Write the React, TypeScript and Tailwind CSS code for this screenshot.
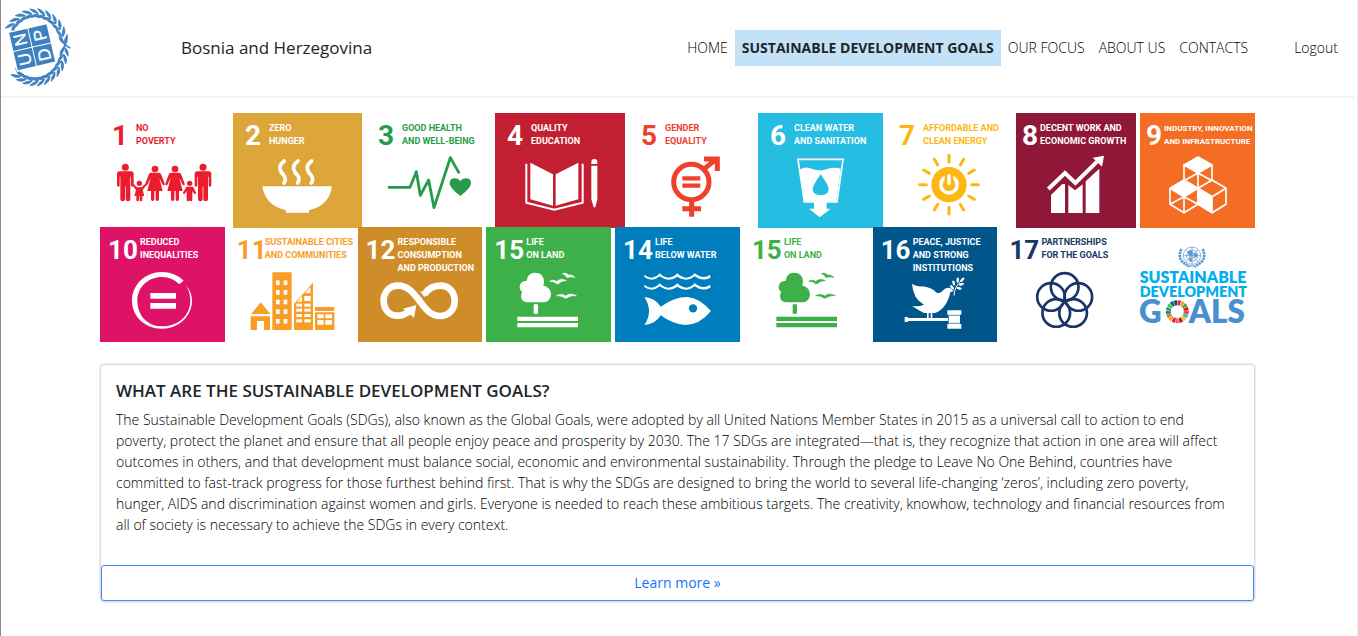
import React from "react";

type Goal = {
  id: string;
  num: string;
  lines: string[];
  tone: string;
  viewBox: string;
  tight?: boolean;
  small?: boolean;
  art: React.ReactNode;
};

const polar = (cx: number, cy: number, r: number, deg: number): [number, number] => [
  cx + r * Math.cos((deg * Math.PI) / 180),
  cy + r * Math.sin((deg * Math.PI) / 180),
];

function Adult({ x, y = 168 }: { x: number; y?: number }) {
  return (
    <g transform={`translate(${x} ${y})`}>
      <circle cx="0" cy="10" r="10.5" />
      <path d="M-17 22h34q8 0 8 8v34q0 4-4 4t-4-4V38h-2v68q0 6-7 6t-7-6V68h-2v38q0 6-7 6t-7-6V38h-2v26q0 4-4 4t-4-4V30q0-8 8-8z" />
    </g>
  );
}

function Woman({ x }: { x: number }) {
  return (
    <g transform={`translate(${x} 173)`}>
      <circle cx="0" cy="10" r="10" />
      <path d="M-12 21h24q5 0 7 6l10 27q1 4-2 5t-5-3l-9-20 10 40H12v25q0 5-5 5t-5-5V76h-4v25q0 5-5 5t-5-5V76h-11l10-40-9 20q-2 4-5 3t-2-5l10-27q2-6 7-6z" />
    </g>
  );
}

function Family() {
  return (
    <g fill="currentColor">
      <Adult x={91} />
      <Adult x={324} />
      <Woman x={180} />
      <Woman x={240} />
      <circle cx="133" cy="226" r="8" />
      <path d="M116 228l10 10h14l10-10 4 4-11 14 5 18h-6v12q0 4-4 4t-4-4v-12h-2v12q0 4-4 4t-4-4v-12h-6l5-18-11-14z" />
      <circle cx="284" cy="226" r="8" />
      <path d="M274 236h20l10 20-5 3-7-10v26q0 5-4 5t-4-5v-14v14q0 5-5 5t-4-5v-26l-7 10-5-3z" />
    </g>
  );
}

function Bowl() {
  return (
    <g>
      <path d="M502 235h209q-8 58-69 72v7h-69v-7q-62-14-71-72z" fill="currentColor" />
      {[568, 609, 650].map((x) => (
        <path
          key={x}
          d={`M${x} 159q-16 12-13 24t11 18q9 12 1 24`}
          fill="none"
          stroke="currentColor"
          strokeWidth="11"
          strokeLinecap="round"
        />
      ))}
    </g>
  );
}

function Pulse() {
  return (
    <g>
      <path
        d="M87 238h63l19-47 12 71 25-46 16 83 49-150 25 44"
        fill="none"
        stroke="currentColor"
        strokeWidth="8.5"
        strokeLinecap="round"
        strokeLinejoin="round"
      />
      <path d="M301 264q-32-24-32-38 0-15 15-15 12 0 17 9 5-9 17-9 15 0 15 15 0 14-32 38z" fill="currentColor" />
    </g>
  );
}

function Book() {
  return (
    <g fill="currentColor">
      <path d="M511 164l68 35v94l-68-19zM587 199l68-35v110l-68 19z" />
      <path d="M499 167v117l84 21 85-21V167" fill="none" stroke="currentColor" strokeWidth="6" />
      <path d="M694 168v-7q0-8 9-8t9 8v7zM694 173h18v101l-6 24h-5l-7-24z" />
    </g>
  );
}

function Gender() {
  return (
    <g fill="none" stroke="currentColor">
      <circle cx="199" cy="222" r="53" strokeWidth="15" />
      <path d="M200 276v50M172 302h56" strokeWidth="15" />
      <path d="M236 184l40-33M237 153h40v36" strokeWidth="15" />
      <path d="M172 211h54M172 233h54" strokeWidth="13" />
    </g>
  );
}

function Water() {
  return (
    <g>
      <path d="M519 154h135l-18 128h-98z" fill="none" stroke="currentColor" strokeWidth="5" />
      <path
        d="M524 185q16-10 31-4 26 10 44 4 26-10 48-3l-13 100h-29v20h12l-33 26-32-26h15v-20h-30z"
        fill="currentColor"
      />
      <path d="M587 199q24 34 24 43 0 19-24 19t-24-19q0-9 24-43z" fill="#26bde2" />
    </g>
  );
}

function Sun() {
  return (
    <g>
      <circle cx="177" cy="230" r="53" fill="currentColor" />
      {Array.from({ length: 12 }, (_, i) => {
        const [x1, y1] = polar(177, 230, 68, i * 30);
        const [x2, y2] = polar(177, 230, 88, i * 30);
        return (
          <line key={i} x1={x1} y1={y1} x2={x2} y2={y2} stroke="currentColor" strokeWidth="9" strokeLinecap="round" />
        );
      })}
      <circle cx="177" cy="230" r="30" fill="#fff" />
      <circle cx="177" cy="230" r="19" fill="currentColor" />
      <path d="M164 196h26v30h-26z" fill="currentColor" />
      <path d="M177 203v23" stroke="#fff" strokeWidth="10" strokeLinecap="round" />
    </g>
  );
}

function Growth() {
  return (
    <g fill="currentColor">
      <path d="M483 315v-54l34-33h8v87zM535 315v-84l20 16 23-18v86zM587 315v-95l41-38v133z" />
      <path d="M475 243l50-48 31 30 65-64" fill="none" stroke="currentColor" strokeWidth="12" />
      <path d="M642 143l-6 33-28-27z" />
    </g>
  );
}

function Cubes() {
  return (
    <g fill="none" stroke="currentColor" strokeWidth="5" strokeLinejoin="round">
      <path d="M924 147l42 24-42 24-42-24z" fill="currentColor" />
      <path d="M882 170v48M966 170v48M924 195v46M882 218l42-23 42 23" />
      <path d="M882 216l42 25-42 25-42-25z" fill="currentColor" />
      <path d="M840 241v48l42 25 42-25v-48M882 266v48M840 289l42-23 42 23" />
      <path d="M924 241l42-25 42 25-42 25zM1008 241v48l-42 25" />
      <path d="M966 266v48l-42-25v-48z" fill="currentColor" />
    </g>
  );
}

function Equal() {
  return (
    <g fill="currentColor">
      <path d="M266 167q-27-26-65-26c-50 0-90 38-90 86s40 84 90 84 90-38 90-84q0-24-18-46 13 22 13 46c0 45-38 77-84 77s-75-34-75-77 35-71 74-71q30 0 52 22z" />
      <path d="M166 204h77v17h-77zM166 234h77v17h-77z" />
    </g>
  );
}

function City() {
  return (
    <g>
      <path
        d="M468 267l29-35 29 35zM467 274h58v41h-18v-27h-21v27h-19zM532 142h58v173h-58zM597 236l57-63v142h-57zM660 246h58v12h-58zM660 262h58v53h-58z"
        fill="currentColor"
      />
      <g fill="#fff">
        {[166, 195, 224, 253, 282].map((y) => (
          <React.Fragment key={y}>
            <rect x="543" y={y} width="11" height="14" />
            <rect x="566" y={y} width="11" height="14" />
          </React.Fragment>
        ))}
        {[236, 251, 267, 283].map((y) => (
          <React.Fragment key={y}>
            <rect x="604" y={y} width="17" height="9" />
            <rect x="628" y={y} width="19" height="9" />
          </React.Fragment>
        ))}
        <path d="M606 230l15-17v17zM630 204l16-18v18zM628 213h19v15h-19zM667 268h19v12h-19zM691 268h20v12h-20zM667 285h19v14h-19zM691 285h20v14h-20z" />
      </g>
    </g>
  );
}

function Infinity() {
  return (
    <g>
      <path
        d="M208 208q18-26 47-26c27 0 44 19 44 45s-17 46-44 46c-56 0-66-91-126-91-26 0-43 19-43 45s17 45 43 45q18 0 32-13"
        fill="none"
        stroke="currentColor"
        strokeWidth="20"
      />
      <path d="M184 240l-7 38-33-27z" fill="currentColor" />
      <path d="M195 199l13 17 13-12" fill="currentColor" />
    </g>
  );
}

function Land({ dx = 0 }: { dx?: number }) {
  return (
    <g fill="currentColor" transform={`translate(${dx} 0)`}>
      <path d="M522 232q-20 0-21-18 0-7 4-13-9-6-8-18 2-15 21-16 3-24 25-24 26 0 27 27 0 7-3 11 24 7 24 27-2 23-22 24z" />
      <path d="M539 238h13v28h-13zM490 275h182v13H490zM490 294h182v13H490z" />
      <path
        d="M587 169c9-5 15-4 21 1 8-8 18-9 29-3-12 0-18 3-23 9h-7c-4-5-11-7-20-7zM608 212c10-5 19-4 27 1 9-7 19-7 32-1-14-1-22 2-28 7h-7c-6-5-13-7-24-7zM625 146c8-3 14-1 18 4 6-1 13 0 20 8-8-3-14-3-19-1h-6c-3-6-6-9-13-11z"
        stroke="currentColor"
        strokeWidth="2"
      />
    </g>
  );
}

function Fish() {
  return (
    <g>
      {[149, 179].map((y) => (
        <path
          key={y}
          d={`M97 ${y}q24 20 46-4q26 26 53 0q28 26 52 0q24 20 47 4v9q-24 13-47-4q-24 20-52 1q-26 19-53-1q-22 19-46 2z`}
          fill="currentColor"
        />
      ))}
      <path
        d="M97 216q34 4 49 29 40-29 79-29 40 4 72 42-34 42-78 42-38-3-73-29-16 27-49 29 28-41 0-84z"
        fill="currentColor"
      />
      <circle cx="243" cy="250" r="12.5" fill="#007dbc" />
    </g>
  );
}

function Dove() {
  return (
    <g fill="currentColor">
      <path d="M132 177q15 9 31 7 26 2 43 19 9 4 18-6 9-11 22-8l11 9-10 4c-5 27-20 53-45 62h-34q-18-9-36-21 20 3 36-4-32-16-36-62z" />
      <path d="M177 262h5v18h-5zM188 262h5v18h-5z" />
      <path d="M110 276h10v3h120v9H120v3h-10zM238 256h42v13h-42zM242 269h34v28h-34zM238 297h42v14h-42z" />
      <path d="M242 271h34M242 295h34" stroke="#00558a" strokeWidth="2" />
      <path d="M258 212q0-26 24-48" fill="none" stroke="currentColor" strokeWidth="3" />
      {[
        [252, 187, 50],
        [257, 174, 75],
        [269, 165, 95],
        [283, 164, -45],
        [280, 178, -15],
        [273, 190, 10],
      ].map(([x, y, a]) => (
        <ellipse key={a} cx={x} cy={y} rx="8" ry="3.8" transform={`rotate(${a} ${x} ${y})`} />
      ))}
    </g>
  );
}

function Rings() {
  return (
    <g fill="none" stroke="currentColor" strokeWidth="8">
      {Array.from({ length: 5 }, (_, i) => {
        const [cx, cy] = polar(593, 229, 43, -90 + i * 72);
        return <circle key={i} cx={cx} cy={cy} r="41.5" />;
      })}
    </g>
  );
}

const WHEEL = [
  "#e5243b", "#dda63a", "#4c9f38", "#c5192d", "#ff3a21", "#26bde2", "#fcc30b", "#a21942", "#fd6925",
  "#dd1367", "#fd9d24", "#bf8b2e", "#3f7e44", "#0a97d9", "#56c02b", "#00689d", "#19486a",
];

function SdgLogo() {
  return (
    <svg
      viewBox="789 6 375 345"
      className="block h-[115px] w-[125px] max-w-none overflow-visible"
      role="img"
      aria-label="Sustainable Development Goals"
    >
      <g fill="none" stroke="#5b97cf">
        <g strokeWidth="2">
          <circle cx="975" cy="92" r="26" />
          <circle cx="975" cy="92" r="17" />
          <circle cx="975" cy="92" r="8" />
          <path d="M949 92h52M975 66v52M957 74l36 36M993 74l-36 36" />
        </g>
        <path d="M963 80l8-5 7 8-5 10-9-3zM983 84l8 4-2 9-8-3zM966 99l8 1 1 8-6 2z" fill="#5b97cf" />
        <path d="M943 72q-16 36 24 51M1007 72q16 36-24 51" strokeWidth="8" strokeDasharray="7 2" />
        <path d="M962 126q13-8 26 0" strokeWidth="3" />
      </g>
      <g fontFamily="Lato, sans-serif" fontWeight="800">
        <text x="818" y="175" fontSize="48" fill="#00aeef">SUSTAINABLE</text>
        <text x="818" y="216" fontSize="43" fill="#00aeef">DEVELOPMENT</text>
        <g fontSize="94" fill="#4b8fd0">
          <text x="816" y="293">G</text>
          <text x="965" y="293">ALS</text>
        </g>
      </g>
      {WHEEL.map((color, i) => {
        const step = 360 / 17;
        const [x1, y1] = polar(931, 260, 27, i * step - 90 + 1.5);
        const [x2, y2] = polar(931, 260, 27, (i + 1) * step - 90 - 1.5);
        return <path key={color} d={`M${x1} ${y1}A27 27 0 0 1 ${x2} ${y2}`} fill="none" stroke={color} strokeWidth="15" />;
      })}
    </svg>
  );
}

const ROW_ONE: Goal[] = [
  { id: "1", num: "1", lines: ["NO", "POVERTY"], tone: "text-[#eb1c2d]", viewBox: "15 147 375 213", art: <Family /> },
  { id: "2", num: "2", lines: ["ZERO", "HUNGER"], tone: "bg-[#dda63a] text-white", viewBox: "414 147 375 213", art: <Bowl /> },
  { id: "3", num: "3", lines: ["GOOD HEALTH", "AND WELL-BEING"], tone: "text-[#279b48]", viewBox: "18 147 375 213", art: <Pulse /> },
  { id: "4", num: "4", lines: ["QUALITY", "EDUCATION"], tone: "bg-[#c31f33] text-white", viewBox: "405 147 375 213", art: <Book /> },
  { id: "5", num: "5", lines: ["GENDER", "EQUALITY"], tone: "text-[#ef402b]", viewBox: "12 147 375 213", art: <Gender /> },
  { id: "6", num: "6", lines: ["CLEAN WATER", "AND SANITATION"], tone: "bg-[#26bde2] text-white", viewBox: "399 147 375 213", art: <Water /> },
  { id: "7", num: "7", lines: ["AFFORDABLE AND", "CLEAN ENERGY"], tone: "text-[#fdb713]", viewBox: "-9 147 375 213", art: <Sun /> },
  { id: "8", num: "8", lines: ["DECENT WORK AND", "ECONOMIC GROWTH"], tone: "bg-[#8f1838] text-white", viewBox: "378 147 375 213", tight: true, art: <Growth /> },
  { id: "9", num: "9", lines: ["INDUSTRY, INNOVATION", "AND INFRASTRUCTURE"], tone: "bg-[#f36d25] text-white", viewBox: "750 147 375 213", tight: true, small: true, art: <Cubes /> },
];

const ROW_TWO: Goal[] = [
  { id: "10", num: "10", lines: ["REDUCED", "INEQUALITIES"], tone: "bg-[#de1367] text-white", viewBox: "15 138 375 213", art: <Equal /> },
  { id: "11", num: "11", lines: ["SUSTAINABLE CITIES", "AND COMMUNITIES"], tone: "text-[#f99d26]", viewBox: "402 138 375 213", tight: true, art: <City /> },
  { id: "12", num: "12", lines: ["RESPONSIBLE", "CONSUMPTION", "AND PRODUCTION"], tone: "bg-[#cf8d2a] text-white", viewBox: "9 138 375 213", art: <Infinity /> },
  { id: "15", num: "15", lines: ["LIFE", "ON LAND"], tone: "bg-[#3eb049] text-white", viewBox: "396 138 375 213", art: <Land /> },
  { id: "14", num: "14", lines: ["LIFE", "BELOW WATER"], tone: "bg-[#007dbc] text-white", viewBox: "9 138 375 213", art: <Fish /> },
  { id: "15-light", num: "15", lines: ["LIFE", "ON LAND"], tone: "text-[#3eb049]", viewBox: "396 138 375 213", art: <Land dx={3} /> },
  { id: "16", num: "16", lines: ["PEACE, JUSTICE", "AND STRONG", "INSTITUTIONS"], tone: "bg-[#00558a] text-white", viewBox: "15 138 375 213", art: <Dove /> },
  { id: "17", num: "17", lines: ["PARTNERSHIPS", "FOR THE GOALS"], tone: "text-[#1a3668]", viewBox: "402 138 375 213", art: <Rings /> },
];

function GoalTile({ goal }: { goal: Goal }) {
  const double = goal.num.length > 1;
  const spacing = double ? "pl-2" : goal.tight ? "gap-0.5 pl-1.5" : "gap-2 pl-3";
  const numeral = double ? (goal.tight ? "w-7 text-[26px]" : "w-8 text-[26px]") : "w-4 text-[28px]";
  return (
    <article className={`h-full min-w-0 ${goal.tone}`}>
      <div className={`flex h-11 items-start pt-[9px] font-['Roboto',sans-serif] font-bold ${spacing}`}>
        <span className={`shrink-0 leading-7 ${numeral}`}>{goal.num}</span>
        <h2 className={`leading-[13px] whitespace-nowrap ${goal.small ? "text-[8px]" : "text-[9px]"}`}>
          {goal.lines.map((line) => (
            <span key={line} className="block">
              {line}
            </span>
          ))}
        </h2>
      </div>
      <svg viewBox={goal.viewBox} className="block h-[71px] w-[125px] max-w-none overflow-visible" aria-hidden="true">
        {goal.art}
      </svg>
    </article>
  );
}

function UndpLogo() {
  const leaves: { t: number; dir: number }[] = [];
  for (let t = -8; t >= -150; t -= 13) leaves.push({ t, dir: -1 });
  for (let t = 2; t <= 122; t += 12) leaves.push({ t, dir: 1 });
  return (
    <svg viewBox="0 0 216 288" className="block h-24 w-[72px]" role="img" aria-label="UNDP">
      <g fill="#3f81be" stroke="#3f81be">
        {leaves.map(({ t, dir }) => {
          const rad = (t * Math.PI) / 180;
          const x = 102 + 88 * Math.cos(rad);
          const y = 142 + 101 * Math.sin(rad);
          const heading = (Math.atan2(dir * 101 * Math.cos(rad), -dir * 88 * Math.sin(rad)) * 180) / Math.PI;
          return (
            <g key={t} transform={`translate(${x} ${y}) rotate(${heading})`} strokeWidth="2.5">
              <path d="M-4 0Q4-14 23-12 12-2-4 0z" />
              <path d="M-4 0Q4 14 23 12 12 2-4 0z" />
            </g>
          );
        })}
        <path d="M180 112q8 25 28 32M180 162q8-20 18-40" fill="none" strokeWidth="5" />
      </g>
      <g transform="translate(94 142) rotate(-13)">
        <rect x="-62" y="-62" width="124" height="124" fill="#fff" />
        <g fill="#3f81be">
          <rect x="-58" y="-58" width="56" height="56" />
          <rect x="1" y="-58" width="56" height="56" />
          <rect x="-58" y="1" width="56" height="56" />
          <rect x="1" y="1" width="56" height="56" />
        </g>
        <g fill="#fff" stroke="#fff" strokeWidth="1" fontFamily="'Liberation Sans', sans-serif" fontSize="52" textAnchor="middle">
          <text transform="translate(-12 -30) rotate(-90)">N</text>
          <text transform="translate(48 -30) rotate(-90)">P</text>
          <text transform="translate(-12 30) rotate(-90)">U</text>
          <text transform="translate(48 30) rotate(-90)">D</text>
        </g>
      </g>
    </svg>
  );
}

const NAV = ["HOME", "SUSTAINABLE DEVELOPMENT GOALS", "OUR FOCUS", "ABOUT US", "CONTACTS"];

export default function App() {
  return (
    <div className="min-h-screen border-r border-l border-r-[#ececec] border-l-[#8c8c8c] bg-white pr-[3px] font-['Open_Sans',sans-serif] text-[#212529]">
      <header className="flex items-center border-b-2 border-[#f2f2f2] pr-4">
        <a href="#home" className="shrink-0">
          <UndpLogo />
        </a>
        <span className="ml-[108px] text-[17px] leading-6 whitespace-nowrap">Bosnia and Herzegovina</span>
        <nav className="ml-auto flex items-center text-[14px] leading-5 font-light whitespace-nowrap text-black">
          {NAV.map((item) => (
            <a
              key={item}
              href={`#${item.toLowerCase().replace(/ /g, "-")}`}
              className={item === NAV[1] ? "bg-[#c4e2f7] px-[7px] py-2 font-bold text-[#212529]" : "px-[7px] py-2"}
            >
              {item}
            </a>
          ))}
          <a href="#logout" className="ml-[39px] py-2">
            Logout
          </a>
        </nav>
      </header>

      <main className="mx-auto max-w-[1155px] pt-[15px]">
        <section aria-label="Goals">
          <div className="grid h-[114px] grid-cols-[129fr_129fr_125fr_130fr_125fr_125fr_125fr_120fr_115fr] gap-1">
            {ROW_ONE.map((goal) => (
              <GoalTile key={goal.id} goal={goal} />
            ))}
          </div>
          <div className="grid h-[115px] grid-cols-9 gap-1">
            {ROW_TWO.map((goal) => (
              <GoalTile key={goal.id} goal={goal} />
            ))}
            <SdgLogo />
          </div>
        </section>

        <section className="mt-[22px] rounded-sm border border-[#dcdcdc] shadow-[0_0_2px_rgba(0,0,0,0.25)]">
          <div className="pt-3.5 pr-[22px] pb-[30px] pl-[15px]">
            <h1 className="text-[17px] leading-6 font-semibold">WHAT ARE THE SUSTAINABLE DEVELOPMENT GOALS?</h1>
            <p className="mt-1.5 text-[14px] leading-[21px] font-light text-black">
              The Sustainable Development Goals (SDGs), also known as the Global Goals, were adopted by all United
              Nations Member States in 2015 as a universal call to action to end poverty, protect the planet and ensure
              that all people enjoy peace and prosperity by 2030. The 17 SDGs are integrated—that is, they recognize
              that action in one area will affect outcomes in others, and that development must balance social, economic
              and environmental sustainability. Through the pledge to Leave No One Behind, countries have committed to
              fast-track progress for those furthest behind first. That is why the SDGs are designed to bring the world
              to several life-changing ‘zeros’, including zero poverty, hunger, AIDS and discrimination against women and
              girls. Everyone is needed to reach these ambitious targets. The creativity, knowhow, technology and
              financial resources from all of society is necessary to achieve the SDGs in every context.
            </p>
          </div>
          <a
            href="#learn-more"
            className="block rounded-[3px] border border-[#3d8bfd] py-1.5 text-center text-[14px] leading-[22px] text-[#0d76f5]"
          >
            Learn more »
          </a>
        </section>
      </main>
    </div>
  );
}
